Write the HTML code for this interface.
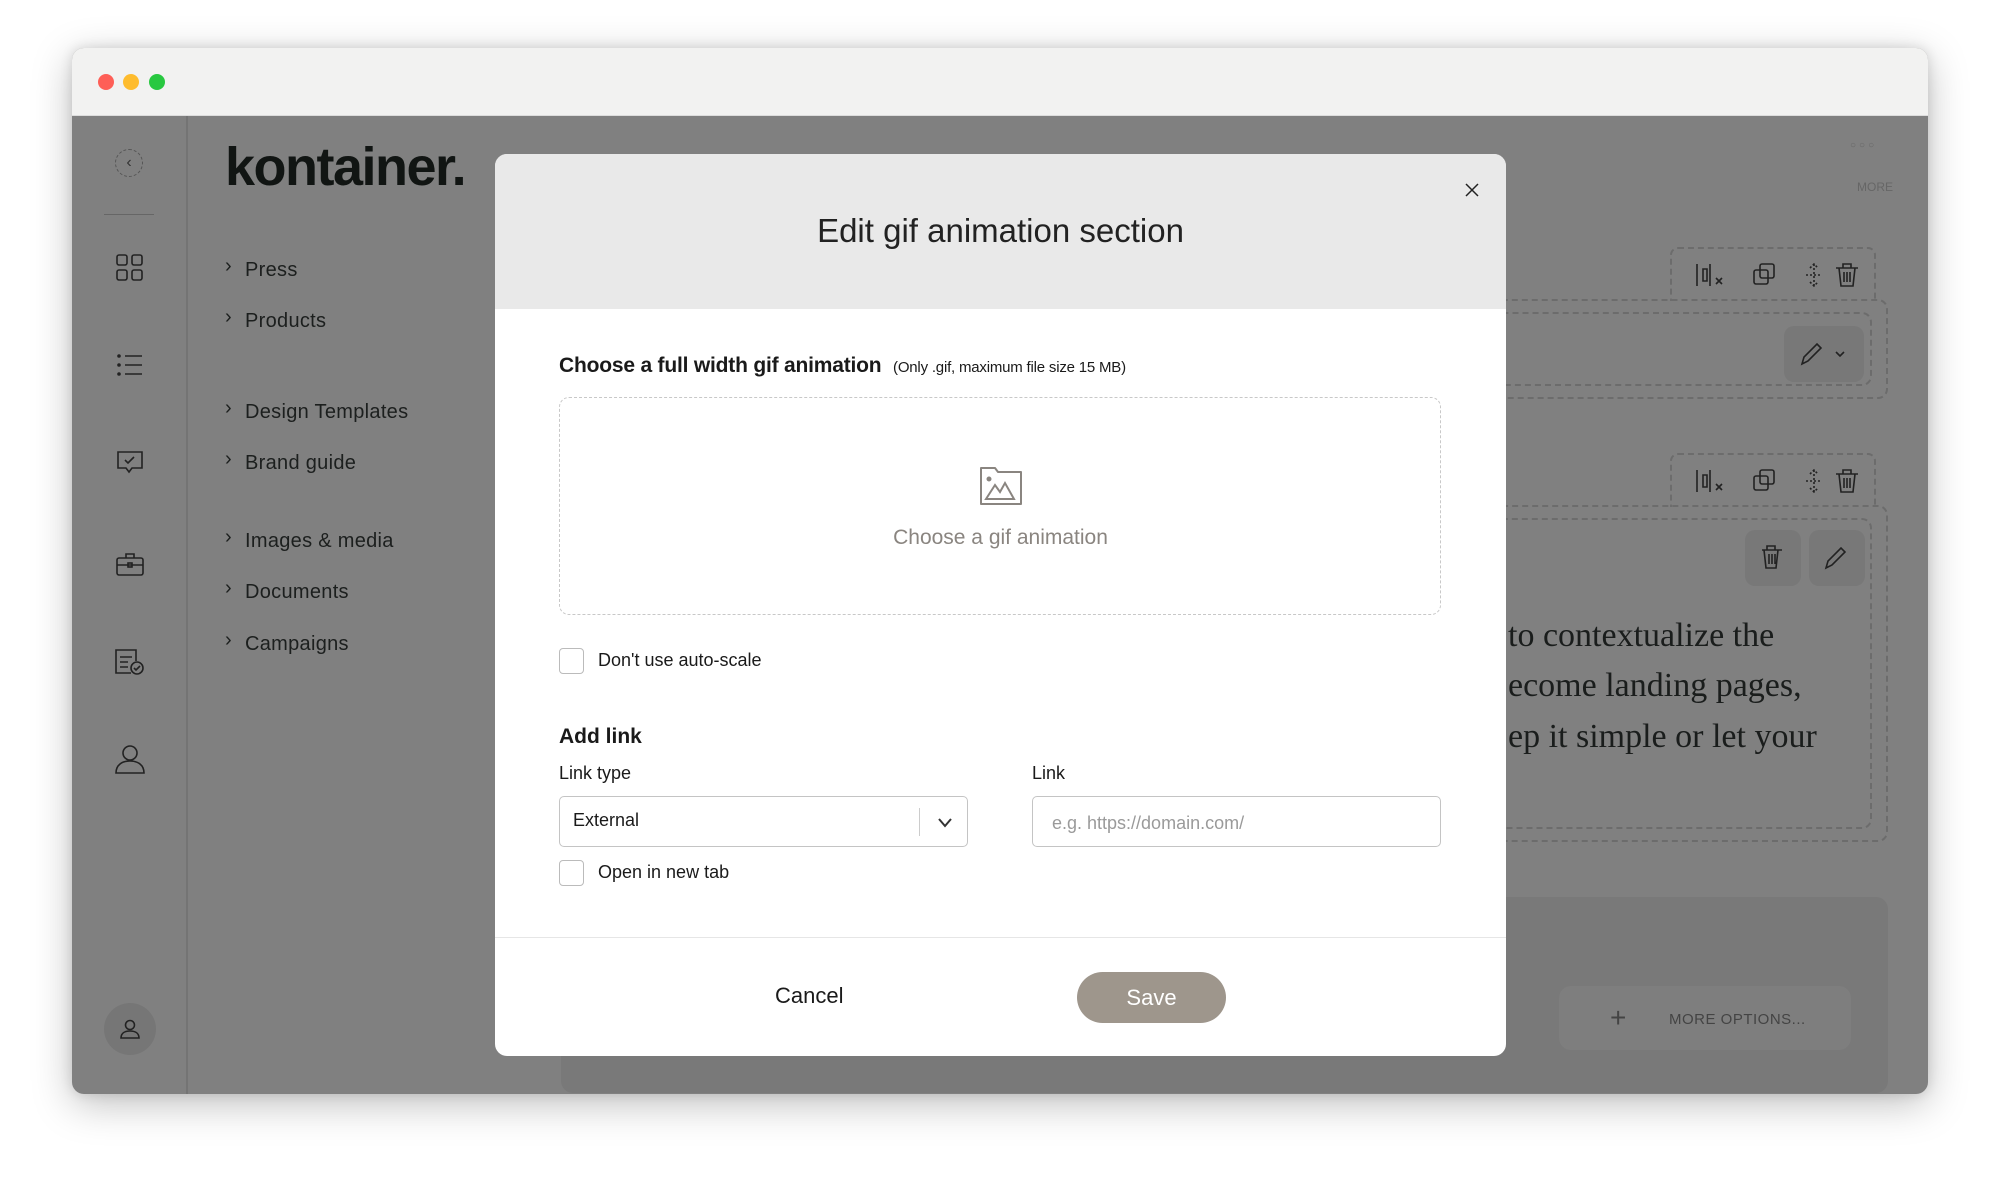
<!DOCTYPE html>
<html><head><meta charset="utf-8"><style>
*{box-sizing:border-box;margin:0;padding:0}
body{width:2000px;height:1189px;background:#fff;font-family:"Liberation Sans",sans-serif;position:relative;overflow:hidden}
.win{position:absolute;left:72px;top:48px;width:1856px;height:1046px;border-radius:12px;overflow:hidden;box-shadow:0 10px 40px rgba(0,0,0,.25),0 0 12px rgba(0,0,0,.12);background:#808080}
.tb{position:absolute;left:0;top:0;width:100%;height:68px;background:#f2f2f1;border-bottom:1px solid #ddd}
.dot{position:absolute;top:26px;width:16px;height:16px;border-radius:50%}
.side{position:absolute;left:0;top:68px;width:116px;bottom:0;border-right:2px solid #747474}
.ab{position:absolute}
.nav{position:absolute;left:173px;font-size:20px;color:#1c1f1e;letter-spacing:.3px}
.nav:before{content:"›";position:absolute;left:-20px;top:-4px;font-size:20px}
.logo{position:absolute;left:153px;top:88px;font-size:54px;font-weight:bold;color:#111513;letter-spacing:-1.5px}
.modal{position:absolute;left:495px;top:154px;width:1011px;height:902px;background:#fff;border-radius:12px;overflow:hidden}
.mh{height:155px;background:#e9e9e9;text-align:center;font-size:33px;color:#222;padding-top:58px;font-weight:300}
.lbl{position:absolute;font-size:18px;color:#1a1a1a}
.cb{position:absolute;width:25px;height:26px;border:1.5px solid #bbb;border-radius:4px}
.ser{position:absolute;font-family:"Liberation Serif",serif;font-size:34px;color:#1a1d1c}
.dash{position:absolute;border:2px dashed #6c6c6c;border-radius:10px}
</style></head><body>
<div class="win">
 <div class="tb">
  <div class="dot" style="left:26px;background:#fe5f57"></div>
  <div class="dot" style="left:51px;background:#febc2e"></div>
  <div class="dot" style="left:77px;background:#28c840"></div>
 </div>
 <div class="side">
  <div class="ab" style="left:43px;top:33px;width:28px;height:28px;border:1px dashed #555;border-radius:50%;text-align:center;line-height:26px;color:#333;font-size:16px">‹</div>
  <div class="ab" style="left:32px;top:98px;width:50px;border-top:1px solid #666"></div>
  <svg class="ab" style="left:44px;top:138px" width="28" height="28" fill="none" stroke="#222" stroke-width="1.6"><rect x="1" y="1" width="10" height="10" rx="2"/><rect x="16" y="1" width="10" height="10" rx="2"/><rect x="1" y="16" width="10" height="10" rx="2"/><rect x="16" y="16" width="10" height="10" rx="2"/></svg>
  <svg class="ab" style="left:45px;top:238px" width="26" height="22" fill="none" stroke="#222" stroke-width="1.6"><path d="M8 2h17M8 11h17M8 20h17"/><circle cx="2" cy="2" r="1" fill="#222"/><circle cx="2" cy="11" r="1" fill="#222"/><circle cx="2" cy="20" r="1" fill="#222"/></svg>
  <svg class="ab" style="left:44px;top:334px" width="28" height="26" fill="none" stroke="#222" stroke-width="1.6"><path d="M2 2h24v16H16l-3 4-3-4H2z"/><path d="M9 10l3 3 6-6"/></svg>
  <svg class="ab" style="left:44px;top:436px" width="28" height="24" fill="none" stroke="#222" stroke-width="1.6"><rect x="1" y="6" width="26" height="17" rx="2"/><path d="M10 6V2h8v4M1 13h26"/><rect x="12" y="11" width="4" height="4"/></svg>
  <svg class="ab" style="left:42px;top:532px" width="32" height="28" fill="none" stroke="#222" stroke-width="1.6"><path d="M17 25H2V2h20v11"/><path d="M6 9h12M6 14h8M6 19h8"/><circle cx="23" cy="20" r="6"/><path d="M20 20l2 2 4-4"/></svg>
  <svg class="ab" style="left:43px;top:628px" width="30" height="30" fill="none" stroke="#222" stroke-width="1.6"><circle cx="15" cy="9" r="7"/><path d="M1 29c0-8 6-12 14-12s14 4 14 12z"/></svg>
  <div class="ab" style="left:32px;top:887px;width:52px;height:52px;border-radius:50%;background:#767676"></div>
  <svg class="ab" style="left:48px;top:903px" width="20" height="20" fill="none" stroke="#222" stroke-width="1.6"><circle cx="10" cy="6" r="4.5"/><path d="M1 19c0-5 4-7 9-7s9 2 9 7z"/></svg>
 </div>
 <div class="logo">kontainer.</div>
 <div class="nav" style="top:211px">Press</div>
 <div class="nav" style="top:262px">Products</div>
 <div class="nav" style="top:353px">Design Templates</div>
 <div class="nav" style="top:404px">Brand guide</div>
 <div class="nav" style="top:482px">Images &amp; media</div>
 <div class="nav" style="top:533px">Documents</div>
 <div class="nav" style="top:585px">Campaigns</div>
 <div class="ab" style="left:1778px;top:92px;font-size:10px;color:#666;letter-spacing:3px">○○○</div>
 <div class="ab" style="left:1785px;top:132px;font-size:12px;color:#666">MORE</div>
 <div class="dash" style="left:1598px;top:199px;width:206px;height:54px;border-bottom:none;border-radius:8px 8px 0 0"></div>
 <div class="dash" style="left:1300px;top:251px;width:516px;height:100px"></div>
 <div class="dash" style="left:1300px;top:264px;width:500px;height:74px"></div>
 <div class="ab" style="left:1712px;top:278px;width:80px;height:56px;background:#787878;border-radius:10px"></div>
 <svg class="ab" style="left:1622px;top:214px" width="170" height="26" fill="none" stroke="#222" stroke-width="1.6"><path d="M3 2v22M16 2v22M9 7h4v12H9zM22 16l6 6M28 16l-6 6"/><rect x="60" y="8" width="14" height="14" rx="2"/><rect x="66" y="2" width="14" height="14" rx="2"/><path d="M120 2v22M116 6l4-4 4 4M116 20l4 4 4-4M112 13h16" stroke-dasharray="2 2"/><path d="M164 6h-22M149 6V2h8v4M145 6l2 18h12l2-18M150 10v10M153 10v10M156 10v10"/></svg>
 <svg class="ab" style="left:1728px;top:292px" width="50" height="26" fill="none" stroke="#222" stroke-width="1.6"><path d="M2 24l2-7L17 4l4 4L8 21zM36 12l4 4 4-4"/></svg>
 <div class="dash" style="left:1598px;top:405px;width:206px;height:54px;border-bottom:none;border-radius:8px 8px 0 0"></div>
 <div class="dash" style="left:1300px;top:457px;width:516px;height:337px"></div>
 <div class="dash" style="left:1300px;top:470px;width:500px;height:311px"></div>
 <svg class="ab" style="left:1622px;top:420px" width="170" height="26" fill="none" stroke="#222" stroke-width="1.6"><path d="M3 2v22M16 2v22M9 7h4v12H9zM22 16l6 6M28 16l-6 6"/><rect x="60" y="8" width="14" height="14" rx="2"/><rect x="66" y="2" width="14" height="14" rx="2"/><path d="M120 2v22M116 6l4-4 4 4M116 20l4 4 4-4M112 13h16" stroke-dasharray="2 2"/><path d="M164 6h-22M149 6V2h8v4M145 6l2 18h12l2-18M150 10v10M153 10v10M156 10v10"/></svg>
 <div class="ab" style="left:1673px;top:482px;width:56px;height:56px;background:#787878;border-radius:10px"></div>
 <div class="ab" style="left:1737px;top:482px;width:56px;height:56px;background:#787878;border-radius:10px"></div>
 <svg class="ab" style="left:1688px;top:496px" width="100" height="26" fill="none" stroke="#222" stroke-width="1.6"><path d="M22 6H2M7 6V2h8v4M4 6l2 18h10l2-18M9 10v10M12 10v10M15 10v10"/><path d="M66 24l2-7L81 4l4 4L72 21z"/></svg>
 <div class="ser" style="left:1436px;top:569px">to contextualize the</div>
 <div class="ser" style="left:1436px;top:619px">ecome landing pages,</div>
 <div class="ser" style="left:1436px;top:670px">ep it simple or let your</div>
 <div class="ab" style="left:489px;top:849px;width:1327px;height:196px;background:#797979;border-radius:12px"></div>
 <div class="ab" style="left:1487px;top:938px;width:292px;height:64px;background:#7e7e7e;border-radius:12px"></div>
 <div class="ab" style="left:1538px;top:954px;font-size:28px;color:#444;font-weight:200">+</div>
 <div class="ab" style="left:1597px;top:963px;font-size:15px;color:#444;letter-spacing:.5px">MORE OPTIONS...</div>
</div>

<div class="modal">
 <div class="mh">Edit gif animation section</div>
 <svg class="ab" style="left:970px;top:29px" width="14" height="14" stroke="#222" stroke-width="1.5"><path d="M1 1l12 12M13 1L1 13"/></svg>
 <div class="ab" style="left:64px;top:200px;font-size:21px;font-weight:bold;color:#1a1a1a;letter-spacing:-.2px">Choose a full width gif animation <span style="font-size:15px;font-weight:normal;margin-left:6px">(Only .gif, maximum file size 15 MB)</span></div>
 <div class="ab" style="left:64px;top:243px;width:882px;height:218px;border:1.5px dashed #c8c8c8;border-radius:10px"></div>
 <svg class="ab" style="left:483px;top:310px" width="46" height="42" fill="none" stroke="#8a8580" stroke-width="2"><path d="M3 4h14l3 4h23v32H3z" stroke-linejoin="round"/><path d="M8 35l9-14 5 7 5-9 9 16z"/><circle cx="11" cy="15" r="1.5" fill="#8a8580"/></svg>
 <div class="ab" style="left:0;width:1011px;top:372px;text-align:center;font-size:21px;color:#8a8580">Choose a gif animation</div>
 <div class="cb" style="left:64px;top:494px"></div>
 <div class="lbl" style="left:103px;top:496px">Don't use auto-scale</div>
 <div class="lbl" style="left:64px;top:571px;font-size:21px;font-weight:600">Add link</div>
 <div class="lbl" style="left:64px;top:609px">Link type</div>
 <div class="lbl" style="left:537px;top:609px">Link</div>
 <div class="ab" style="left:64px;top:642px;width:409px;height:51px;border:1.5px solid #c4c4c4;border-radius:5px"></div>
 <div class="lbl" style="left:78px;top:656px">External</div>
 <div class="ab" style="left:424px;top:654px;height:28px;border-left:1px solid #ccc"></div>
 <svg class="ab" style="left:443px;top:664px" width="14" height="10" fill="none" stroke="#333" stroke-width="2"><path d="M1 1l6 7 6-7"/></svg>
 <div class="ab" style="left:537px;top:642px;width:409px;height:51px;border:1.5px solid #c4c4c4;border-radius:5px"></div>
 <div class="lbl" style="left:557px;top:659px;color:#9a9a9a">e.g. https://domain.com/</div>
 <div class="cb" style="left:64px;top:706px"></div>
 <div class="lbl" style="left:103px;top:708px">Open in new tab</div>
 <div class="ab" style="left:0;top:783px;width:1011px;border-top:1px solid #e6e6e6"></div>
 <div class="ab" style="left:280px;top:829px;font-size:22px;color:#1a1a1a">Cancel</div>
 <div class="ab" style="left:582px;top:818px;width:149px;height:51px;border-radius:26px;background:#9e968c;color:#fff;font-size:22px;text-align:center;line-height:51px">Save</div>
</div>
</body></html>
